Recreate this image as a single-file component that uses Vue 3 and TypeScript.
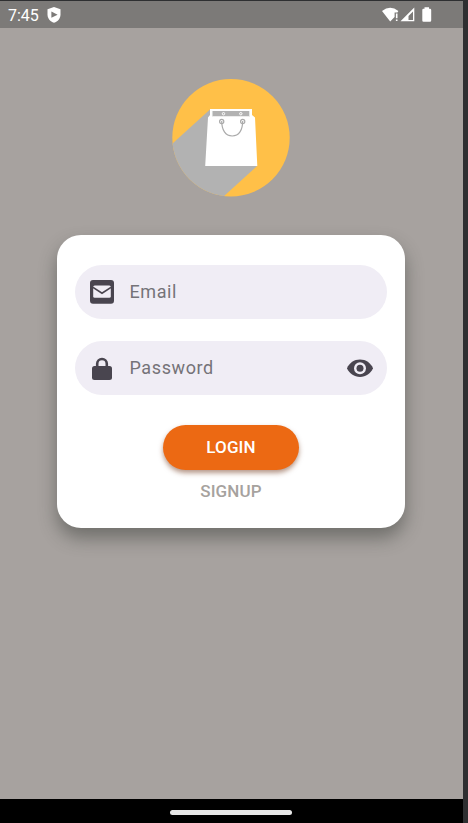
<script setup lang="ts">
import { ref } from 'vue'

const email = ref('')
const password = ref('')
const revealed = ref(false)
</script>

<template>
  <div class="frame">
    <main class="phone">
      <header class="status">
        <span class="time">7:45</span>
        <svg class="shield" viewBox="0 0 14 16">
          <path fill="#fff" d="M7 0 L13.5 2.3 V7.5 C13.5 11.5 10.8 14.6 7 15.8 C3.2 14.6 .5 11.5 .5 7.5 V2.3 Z" />
          <path fill="#7c7a78" d="M4.4 4.6 L10.6 7.7 L4.4 10.8 Z" />
        </svg>
        <svg class="signals" viewBox="0 0 50 16">
          <path fill="#fff" d="M0 4 Q8.2 -2.6 16.4 4 L15.4 5.4 H12.6 V10 L8.2 14.6 Z" />
          <path fill="#fff" d="M13.9 6.5 H15.5 V11.2 H13.9 Z M13.9 12.4 H15.5 V14.1 H13.9 Z" />
          <path fill="#fff" fill-rule="evenodd" d="M32.3 .5 V14.2 H18.5 Z M31 4.5 V12.9 H26.5 V9 Z" />
          <path fill="#fff" d="M42.5 .3 H47 V1.8 H48 Q49.2 1.8 49.2 3 V13.6 Q49.2 14.8 48 14.8 H41.5 Q40.3 14.8 40.3 13.6 V3 Q40.3 1.8 41.5 1.8 H42.5 Z" />
        </svg>
      </header>

      <section class="content">
        <svg class="logo" viewBox="0 0 118 118">
          <defs>
            <clipPath id="disc"><circle cx="59" cy="58.800" r="58.700" /></clipPath>
          </defs>
          <g clip-path="url(#disc)">
            <rect width="118" height="118" fill="#ffc048" />
            <path fill="#b2b2b2" d="M38 30.500 L0 65 V118 H51 L85 87 Z" />
          </g>
          <path fill="#fff" d="M38 30 H80 V36 L83 38.500 L85.300 87 H33.200 L36 38.500 L38 36 Z" />
          <path fill="#b2b2b2" d="M40 32 H78 V37.300 H40 Z" />
          <path fill="none" stroke="#f2f7f6" stroke-width=".8" d="M40.200 32 V37 M77.500 32 V37" />
          <g fill="#b2b2b2" stroke="#fff" stroke-width="1">
            <circle cx="51.500" cy="34.700" r="1.200" />
            <circle cx="68.800" cy="34.700" r="1.200" />
          </g>
          <g fill="none" stroke="#aaa" stroke-width="1.200">
            <circle cx="49.700" cy="42.500" r="2.100" />
            <circle cx="70.700" cy="42.500" r="2.100" />
            <path d="M49.700 42 C49.700 51 53.500 57 60.200 57 C67 57 70.700 51 70.700 42" />
          </g>
        </svg>

        <form class="card" @submit.prevent>
          <label class="field">
            <svg class="icon" viewBox="0 0 24 24">
              <rect y="0" width="24" height="23.700" rx="3" fill="#49454f" />
              <rect x="3.200" y="5.500" width="17.600" height="12.300" rx="1.500" fill="#f0edf5" />
              <path fill="none" stroke="#49454f" stroke-width="1.700" d="M3 7.400 L12 13.300 L21 7.400" />
            </svg>
            <input v-model="email" type="text" placeholder="Email" />
          </label>
          <label class="field">
            <svg class="icon" viewBox="0 0 24 24">
              <rect x="2" y="10" width="20" height="14" rx="2.500" fill="#49454f" />
              <path fill="none" stroke="#49454f" stroke-width="2.600" d="M7.200 11 V7.800 A4.800 4.800 0 0 1 16.800 7.800 V11" />
            </svg>
            <input v-model="password" :type="revealed ? 'text' : 'password'" placeholder="Password" />
            <svg class="eye" viewBox="0 0 26 18" @click.prevent="revealed = !revealed">
              <path fill="#49454f" d="M0 9.300 C2.200 3.900 7.200 .5 13 .5 S23.800 3.900 26 9.300 C23.800 14.600 18.800 18 13 18 S2.200 14.600 0 9.300 Z" />
              <circle cx="13" cy="9.300" r="6" fill="#f0edf5" />
              <circle cx="13" cy="9.300" r="3.500" fill="#49454f" />
            </svg>
          </label>
          <button class="login" type="submit">LOGIN</button>
          <button class="signup" type="button">SIGNUP</button>
        </form>
      </section>

      <footer class="nav"><span class="handle"></span></footer>
    </main>
  </div>
</template>

<style>
body {
  background: #2e2f31;
}
</style>

<style scoped>
.frame {
  box-sizing: border-box;
  height: 823px;
  padding: 1px 5px 0 0;
  background: #2e2f31;
  font-family: Roboto, sans-serif;
}
.phone {
  display: flex;
  flex-direction: column;
  height: 822px;
  background: #a7a29f;
}
.status {
  display: flex;
  align-items: center;
  height: 27px;
  box-sizing: border-box;
  padding: 0 31px 0 8px;
  background: #7c7a78;
  color: #fff;
}
.time {
  width: 39px;
  font-size: 16px;
  line-height: 27px;
  padding-top: 2px;
  box-sizing: border-box;
}
.shield {
  width: 14px;
  height: 16px;
}
.signals {
  width: 50px;
  height: 16px;
  margin-left: auto;
}
.content {
  flex: 1;
  display: flex;
  flex-direction: column;
  align-items: center;
  padding: 51px 1px 0 0;
}
.logo {
  width: 118px;
  height: 118px;
}
.card {
  display: flex;
  flex-direction: column;
  align-items: center;
  box-sizing: border-box;
  width: 348px;
  height: 293.4px;
  margin: 38px 0 0;
  padding: 30px 18px 0;
  border-radius: 24px;
  background: #fff;
  box-shadow: 0 10px 18px rgba(40, 46, 42, 0.44);
}
.field {
  display: flex;
  align-items: center;
  box-sizing: border-box;
  width: 100%;
  height: 54px;
  padding: 0 14px 0 15px;
  border-radius: 27px;
  background: #f0edf5;
}
.field + .field {
  margin-top: 22px;
}
.icon {
  flex: none;
  width: 24px;
  height: 24px;
}
.eye {
  flex: none;
  width: 26px;
  height: 18px;
}
input {
  flex: 1;
  min-width: 0;
  margin: 0 0 1px 15.5px;
  padding: 0;
  border: 0;
  outline: 0;
  background: none;
  color: #49454f;
  font: 400 18px/24px Roboto, sans-serif;
  letter-spacing: 0.6px;
}
input::placeholder {
  color: #757378;
  opacity: 1;
}
button {
  border: 0;
  padding: 0;
  font: 500 17px/20px Roboto, sans-serif;
  letter-spacing: 0.15px;
}
.login {
  width: 136px;
  height: 45px;
  margin-top: 30px;
  padding-bottom: 1px;
  border-radius: 22.5px;
  background: #ec6913;
  color: #fff;
  box-shadow: 0 3px 5px rgba(110, 50, 20, 0.5);
}
.signup {
  margin-top: 11px;
  background: none;
  color: #a6a29e;
}
.nav {
  display: flex;
  align-items: center;
  justify-content: center;
  height: 24px;
  padding: 2px 1px 0 0;
  box-sizing: border-box;
  background: #000;
}
.handle {
  width: 122px;
  height: 5px;
  border-radius: 2.5px;
  background: #e8e8e8;
}
</style>
